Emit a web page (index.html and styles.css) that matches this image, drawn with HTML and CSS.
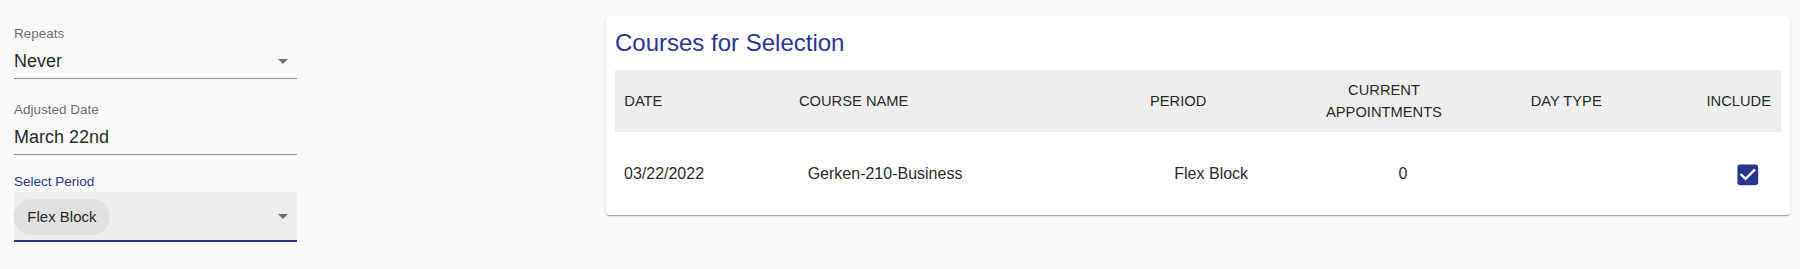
FILE: index.html
```html
<!DOCTYPE html>
<html lang="en">
<head>
<meta charset="utf-8">
<title>Courses for Selection</title>
<link rel="stylesheet" href="styles.css">
</head>
<body>
<div class="page">
  <div class="form">
    <div class="field">
      <div class="label">Repeats</div>
      <div class="control">
        <span class="value">Never</span>
        <svg class="arrow" viewBox="0 0 10 5" width="10" height="5"><path d="M0 0h10L5 5z"/></svg>
      </div>
    </div>
    <div class="field">
      <div class="label">Adjusted Date</div>
      <div class="control">
        <span class="value">March 22nd</span>
      </div>
    </div>
    <div class="field field-focused">
      <div class="label label-focused">Select Period</div>
      <div class="control-filled">
        <span class="chip">Flex Block</span>
        <svg class="arrow" viewBox="0 0 10 5" width="10" height="5"><path d="M0 0h10L5 5z"/></svg>
      </div>
    </div>
  </div>

  <div class="card">
    <h2 class="card-title">Courses for Selection</h2>
    <div class="table">
      <div class="thead">
        <div class="th th-date">Date</div>
        <div class="th th-course">Course Name</div>
        <div class="th th-period">Period</div>
        <div class="th th-appts">Current<br>Appointments</div>
        <div class="th th-daytype">Day Type</div>
        <div class="th th-include">Include</div>
      </div>
      <div class="trow">
        <div class="td td-date">03/22/2022</div>
        <div class="td td-course">Gerken-210-Business</div>
        <div class="td td-period">Flex Block</div>
        <div class="td td-appts">0</div>
        <div class="td td-daytype"></div>
        <div class="td td-include">
          <svg class="checkbox" viewBox="0 0 24 24" width="27.6" height="27.6"><path d="M19 3H5c-1.11 0-2 .9-2 2v14c0 1.1.89 2 2 2h14c1.11 0 2-.9 2-2V5c0-1.1-.89-2-2-2zm-9 14l-5-5 1.41-1.41L10 14.17l7.59-7.59L19 8l-9 9z"/></svg>
        </div>
      </div>
    </div>
  </div>
</div>
</body>
</html>
```

FILE: styles.css
```css
* { box-sizing: border-box; }

html, body {
  margin: 0;
  padding: 0;
  background: #fafafa;
}

body {
  font-family: "Liberation Sans", Arial, Helvetica, sans-serif;
  color: rgba(0, 0, 0, 0.87);
  width: 1800px;
  height: 269px;
  overflow: hidden;
}

.page {
  display: flex;
  align-items: flex-start;
  padding: 0 10px 0 14px;
}

/* ---------- left form ---------- */
.form {
  width: 283.3px;
  flex: none;
  padding-top: 25.6px;
}

.field {
  margin-bottom: 22.3px;
}

.field-focused {
  margin-top: -3.6px;
}

.label {
  font-size: 13.5px;
  line-height: 16px;
  color: rgba(0, 0, 0, 0.6);
  white-space: nowrap;
}

.label-focused {
  color: #283593;
}

.control {
  display: flex;
  align-items: center;
  justify-content: space-between;
  padding: 9px 9px 6.7px 0;
  border-bottom: 1px solid rgba(0, 0, 0, 0.42);
}

.value {
  font-size: 18px;
  line-height: 21px;
  white-space: nowrap;
}

.arrow {
  display: block;
  fill: rgba(0, 0, 0, 0.54);
  flex: none;
}

.control-filled {
  margin-top: 2px;
  height: 50px;
  display: flex;
  align-items: center;
  justify-content: space-between;
  padding: 7px 9px 5px 0;
  background: #eeeeee;
  border-bottom: 2px solid #283593;
}

.chip {
  display: inline-block;
  height: 36px;
  line-height: 36px;
  padding: 0 14px 0 13.3px;
  border-radius: 18px;
  background: #e1e1e1;
  font-size: 15px;
  color: rgba(0, 0, 0, 0.87);
  white-space: nowrap;
}

/* ---------- card ---------- */
.card {
  flex: 1;
  margin-left: 308.7px;
  margin-top: 15.7px;
  height: 199.8px;
  background: #ffffff;
  border-radius: 4px;
  padding: 13px 9.3px 0 9px;
  box-shadow: 0 2px 1px -1px rgba(0, 0, 0, 0.2),
              0 1px 1px 0 rgba(0, 0, 0, 0.14),
              0 1px 3px 0 rgba(0, 0, 0, 0.12);
}

.card-title {
  margin: 0 0 13.3px;
  font-size: 24px;
  line-height: 28px;
  font-weight: 400;
  color: #283593;
  white-space: nowrap;
}

.thead,
.trow {
  display: grid;
  grid-template-columns: 184px 351px 145px 178px 202px 1fr;
  align-items: center;
}

.thead {
  height: 61.7px;
  background: #eeeeee;
}

.th {
  font-size: 14.7px;
  line-height: 22.3px;
  text-transform: uppercase;
  color: rgba(0, 0, 0, 0.87);
  white-space: nowrap;
}

.th-date { padding-left: 9.3px; }
.th-appts { text-align: center; }
.th-daytype { padding-left: 57.7px; }
.th-include { text-align: right; padding-right: 9.7px; }

.trow {
  height: 83.8px;
  padding-top: 1.5px;
}

.td {
  font-size: 16px;
  line-height: 24px;
  color: rgba(0, 0, 0, 0.87);
  white-space: nowrap;
}

.td-date { padding-left: 9px; }
.td-course { padding-left: 8.7px; }
.td-period { padding-left: 24.3px; }
.td-appts { padding-left: 103.5px; }
.td-include {
  display: flex;
  justify-content: flex-end;
  padding-right: 18.85px;
}

.checkbox {
  display: block;
  fill: #283593;
}
```
